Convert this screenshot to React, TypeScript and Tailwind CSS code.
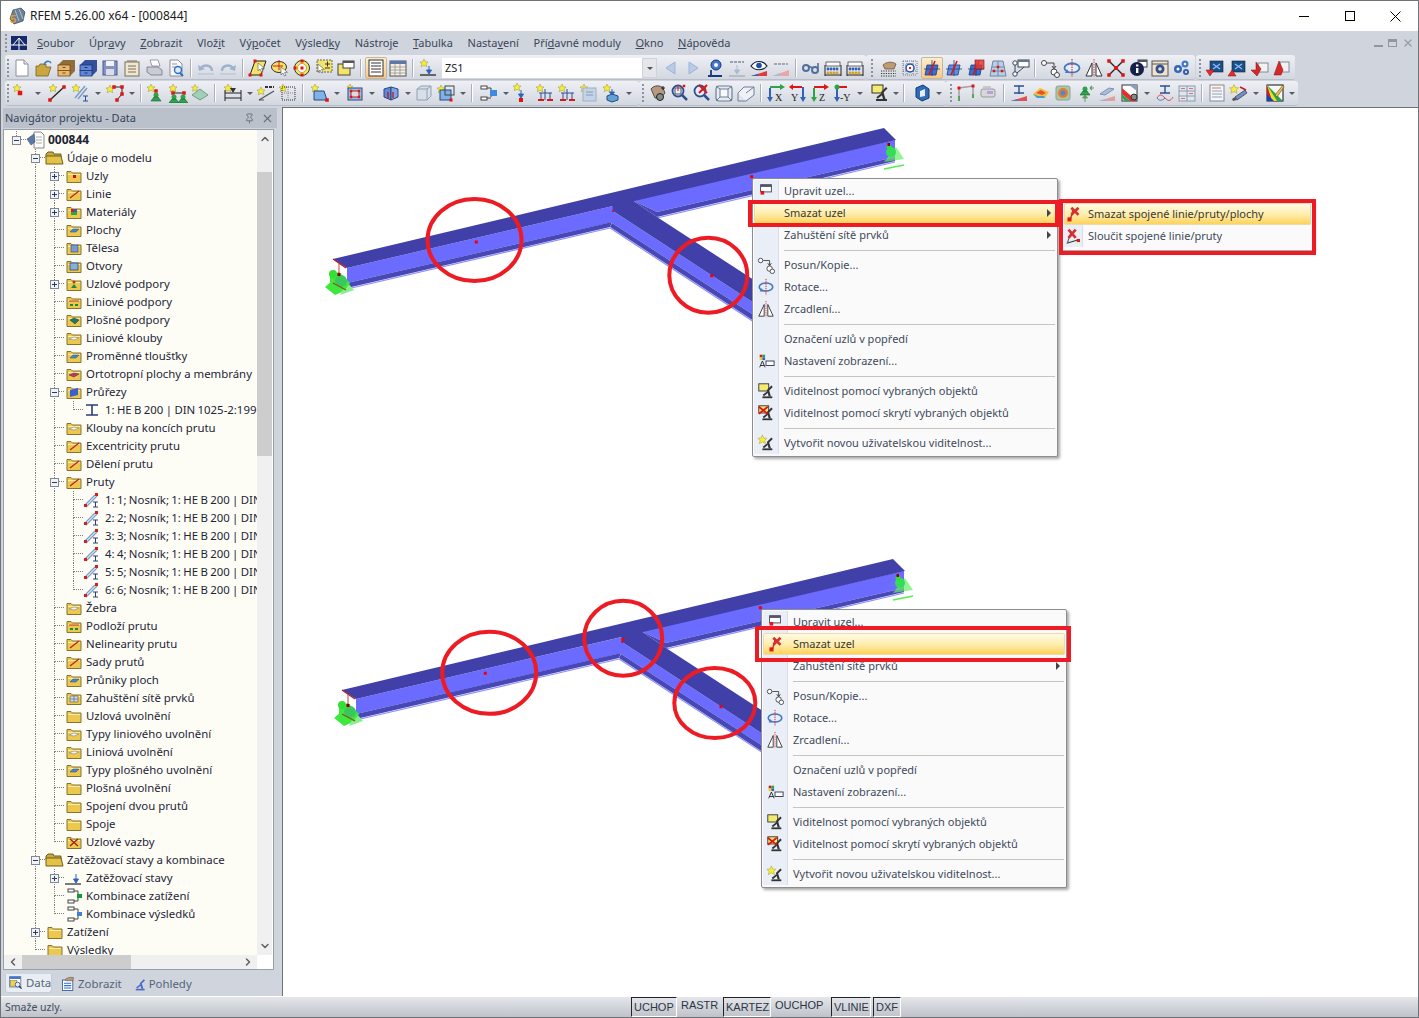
import type { ReactNode } from "react";
import { ChevronDown, ChevronLeft, ChevronRight, ChevronUp, Pin, X } from "lucide-react";

// small drawing helpers for the toolbar bitmaps
const St = ({ x = 5, y = 5, r = 3.6 }: { x?: number; y?: number; r?: number }) => (
  <path
    d={`M${x} ${y - r}l${r * 0.3} ${r * 0.7} ${r * 0.7} ${r * 0.05} -${r * 0.5} ${r * 0.45} ${r * 0.2} ${r * 0.75} -${r * 0.7} -${r * 0.4} -${r * 0.7} ${r * 0.4} ${r * 0.2} -${r * 0.75} -${r * 0.5} -${r * 0.45} ${r * 0.7} -${r * 0.05}z`}
    fill="#f7ee3a"
    stroke="#9c9430"
    strokeWidth="0.5"
  />
);
const N = ({ x, y, s = 3, c = "#e01515" }: { x: number; y: number; s?: number; c?: string }) => (
  <rect x={x - s / 2} y={y - s / 2} width={s} height={s} fill={c} />
);
const Cur = ({ x = 10, y = 9 }: { x?: number; y?: number }) => (
  <path d={`M${x} ${y}v8l2-2 1.5 3 1.5-.7-1.5-3h3z`} fill="#fff" stroke="#555" strokeWidth="0.6" />
);
const Drawer = ({ a, b, c }: { a: string; b: string; c: string }) => (
  <>
    <path d="M2 7l5-5h12v11l-5 5H2z" fill={c} />
    <rect x="2" y="7" width="12" height="5.500" fill={a} stroke={b} strokeWidth="0.8" />
    <rect x="2" y="12.500" width="12" height="5.500" fill={a} stroke={b} strokeWidth="0.8" />
    <rect x="6.500" y="9" width="3" height="1" fill={b} />
    <rect x="6.500" y="14.500" width="3" height="1" fill={b} />
  </>
);
const Plane = ({ a = "#3a6fd0" }: { a?: string }) => (
  <>
    <path d="M5 7h11l-2 10H3z" fill={a} stroke="#1c3f80" strokeWidth="0.8" />
    <path d="M10 2v16M2 11h16" stroke="#1c3f80" strokeWidth="0.8" />
    <path d="M13 3L7 17" stroke="#e01515" strokeWidth="1.6" />
  </>
);
const Bars = () => (
  <>
    <rect x="3" y="4" width="14" height="4" fill="#fff" stroke="#333" strokeWidth="0.7" />
    <path d="M2 18V7M18 18V7" stroke="#222" />
    <path d="M2 17h16" stroke="#222" />
    {[5, 8, 11, 14].map((x) => (
      <g key={x}>
        <circle cx={x} cy="11" r="1.400" fill="#2a5fc0" />
        <circle cx={x} cy="15" r="1.400" fill="#d8a020" />
      </g>
    ))}
  </>
);
const Sup = ({ x = 10, y = 12 }: { x?: number; y?: number }) => (
  <>
    <circle cx={x} cy={y - 2} r="2.500" fill="#2ea44a" />
    <path d={`M${x - 5} ${y + 4}l3-4h4l3 4z`} fill="#2ea44a" stroke="#14602a" strokeWidth="0.6" />
  </>
);
const Mic = ({ c = "#333" }: { c?: string }) => (
  <>
    <path d="M6 18h11v-2H6z" fill={c} />
    <path d="M13 16l-2-7 5-5 1.500 1.500-4 4 2 6.500z" fill={c} />
    <path d="M7 15l5-4" stroke={c} strokeWidth="2" />
  </>
);
const Tile = ({ up }: { up?: boolean }) => (
  <>
    <rect x="5" y="3" width="13" height="11" fill="#1c4f88" stroke="#123" strokeWidth="0.6" />
    <path d="M8 6l7 5M15 6l-7 5" stroke="#8fc0ff" strokeWidth="1.200" />
    <path d={up ? "M1 18h8l-4-6z" : "M1 12h8l-4 6z"} fill="#e82c2c" stroke="#801010" strokeWidth="0.5" />
  </>
);
const Glass = ({ k }: { k: ReactNode }) => (
  <>
    <circle cx="8" cy="8" r="5.500" fill="#e6eefb" stroke="#2b4f92" strokeWidth="1.800" />
    <path d="M12 12l5 5" stroke="#2b4f92" strokeWidth="2.500" />
    {k}
  </>
);

const icons: Record<string, ReactNode> = {
  new: <><path d="M4 2h8l4 4v12H4z" fill="#fff" stroke="#8a8f98" /><path d="M12 2v4h4" fill="#e8e8e8" stroke="#8a8f98" /></>,
  open: <><path d="M2 8h3l1-2h6v3h5l-3 9H2z" fill="#c9a640" stroke="#7a6320" strokeWidth="0.8" /><path d="M10 7c1-4 5-5 7-2" stroke="#3f7cc4" strokeWidth="1.600" fill="none" /></>,
  cab: <Drawer a="#edb86c" b="#6b4d22" c="#8f6d3c" />,
  cabb: <Drawer a="#5f86d8" b="#1f3570" c="#34509a" />,
  save: <><rect x="3" y="3" width="14" height="14" fill="#8492c6" stroke="#4b5a90" /><rect x="6" y="3" width="8" height="5" fill="#f2f2f7" /><rect x="6" y="11" width="8" height="6" fill="#dcdce8" /></>,
  note: <><rect x="3" y="4" width="14" height="14" fill="#f1e6cf" stroke="#77705f" /><path d="M5 3h10M6 8h8M6 11h8M6 14h8" stroke="#77705f" /></>,
  print: <><path d="M6 2h8l2 6H8z" fill="#fff" stroke="#778" strokeWidth="0.7" /><path d="M3 9h11l4 3v5H7l-4-3z" fill="#c8ccd6" stroke="#667" strokeWidth="0.7" /></>,
  prev: <><path d="M4 2h8l4 4v12H4z" fill="#f8f8f8" stroke="#8a8f98" /><path d="M6 6h5M6 9h4" stroke="#99a" /><circle cx="12" cy="12" r="3.500" fill="#dceaff" stroke="#2f6fc0" strokeWidth="1.400" /><path d="M14 15l3 3" stroke="#2f6fc0" strokeWidth="2" /></>,
  undo: <><path d="M16 13c0-6-8-7-11-3" fill="none" stroke="#9fb2cc" strokeWidth="2.400" /><path d="M2 7l1 6 6-2z" fill="#9fb2cc" /><path d="M2 16h16" stroke="#c3cddc" strokeWidth="2" /></>,
  redo: <><path d="M4 13c0-6 8-7 11-3" fill="none" stroke="#9fb2cc" strokeWidth="2.400" /><path d="M18 7l-1 6-6-2z" fill="#9fb2cc" /><path d="M2 16h16" stroke="#c3cddc" strokeWidth="2" /></>,
  para: <><path d="M7 3h11l-5 14H2z" fill="#f4e56a" stroke="#222" /><N x={7} y={3} /><N x={2} y={17} /><N x={13} y={17} /><Cur x={10} y={5} /></>,
  ell: <><ellipse cx="9" cy="9" rx="7.500" ry="5.500" fill="#f4e56a" stroke="#333" /><path d="M9 2v10M3 8h10" stroke="#e01515" /><Cur x={11} y={9} /></>,
  ring: <><circle cx="10" cy="10" r="7.500" fill="#f4e56a" stroke="#333" /><circle cx="10" cy="10" r="4.500" fill="#fff" stroke="#c8a020" /><N x={10} y={10} /><N x={10} y={3} /><N x={10} y={17} /><N x={3} y={10} /></>,
  sel: <><rect x="3" y="2" width="15" height="12" fill="#f4e56a" stroke="#666" strokeDasharray="2 1" /><path d="M11 6h5M13.500 3.500v5M11 10h5" stroke="#333" /><Cur x={4} y={6} /></>,
  win: <><rect x="2" y="6" width="12" height="11" fill="#f4e56a" stroke="#444" /><rect x="7" y="3" width="11" height="7" fill="#fff" stroke="#444" /><rect x="7" y="3" width="11" height="2" fill="#555" /></>,
  list: <><rect x="3" y="2" width="14" height="16" fill="#fff" stroke="#333" /><path d="M5 5h10M5 8h10M5 11h10M5 14h10" stroke="#333" /></>,
  table: <><rect x="2" y="3" width="16" height="15" fill="#f5f0e2" stroke="#555" /><rect x="2" y="3" width="16" height="3" fill="#5a78a8" /><path d="M2 9h16M2 12h16M2 15h16M7 6v12M12 6v12" stroke="#888" strokeWidth="0.7" /></>,
  lc: <><St x={6} y={5} r={4} /><path d="M2 17h16" stroke="#333" strokeWidth="1.400" /><path d="M11 8v6M8.500 12l2.500 4 2.500-4z" fill="#2f62b8" stroke="#2f62b8" /></>,
  back: <path d="M14 4L5 10l9 6z" fill="#b9cbe8" stroke="#9db3d8" />,
  fwd: <path d="M6 4l9 6-9 6z" fill="#b9cbe8" stroke="#9db3d8" />,
  ploc: <><circle cx="11" cy="7" r="5" fill="#4178c8" stroke="#123a80" /><circle cx="11" cy="7" r="2" fill="#fff" /><path d="M6 12v5M3 18h14" stroke="#123a80" strokeWidth="1.800" /></>,
  xxp: <><path d="M10 7v8M7.500 12l2.500 4 2.500-4z" fill="#a9bad6" stroke="#a9bad6" /><path d="M2 18h16" stroke="#a8b0bc" strokeWidth="1.400" /><path d="M3 4h14" stroke="#9aa2ae" strokeWidth="2" strokeDasharray="3 1" /></>,
  eye: <><path d="M2 8c4-6 12-6 16 0-4 5-12 5-16 0z" fill="#fff" stroke="#123" strokeWidth="1.200" /><circle cx="10" cy="7.500" r="2.800" fill="#1f4f9e" /><path d="M2 18l16-5v5z" fill="#e23a3a" /><path d="M2 18l7-2v2z" fill="#2f62b8" /></>,
  slope: <><path d="M3 6h14" stroke="#a0a7b2" strokeWidth="2" strokeDasharray="3 1" /><path d="M2 18l16-6v6z" fill="#e8a6a6" /><path d="M2 18l7-3v3z" fill="#a9bad6" /></>,
  spec: <><circle cx="5" cy="10" r="3" fill="none" stroke="#50709a" strokeWidth="2" /><circle cx="14" cy="12" r="3" fill="none" stroke="#50709a" strokeWidth="2" /><path d="M7 8l5 2M17 5v5" stroke="#50709a" strokeWidth="1.600" /></>,
  bars: <Bars />,
  hand: <><path d="M5 7c3-3 9-4 13-1l-2 5H7z" fill="#c09a70" stroke="#5c4530" strokeWidth="0.7" /><path d="M3 13h15M3 15.500h15M3 18h15" stroke="#333" strokeDasharray="1.200 1.200" /></>,
  gridg: <><path d="M3 3h14M3 7h14M3 13h14M3 17h14M3 3v14M7 3v14M13 3v14M17 3v14" stroke="#5a5a70" strokeDasharray="1 1" strokeWidth="0.8" /><circle cx="10" cy="10" r="4" fill="#fff" stroke="#2050b0" strokeWidth="1.500" /><N x={10} y={10} s={2} /></>,
  pl1: <Plane />,
  pl3: <Plane a="#5f8fe0" />,
  pl2: <><Plane /><rect x="9" y="2" width="9" height="9" fill="#e8332a" fillOpacity="0.8" stroke="#801010" strokeWidth="0.6" /></>,
  mesh: <><path d="M5 3h10l3 15H2z" fill="#b9cfe6" stroke="#6f86a8" /><path d="M10 3v15M3.500 9h13M2.800 13h14.500" stroke="#6f86a8" /><N x={10} y={9} s={2.500} /><N x={6} y={13} s={2.500} /><N x={14} y={13} s={2.500} /></>,
  nodewin: <><circle cx="5" cy="5" r="2.200" fill="#fff" stroke="#345" /><circle cx="5" cy="16" r="2.200" fill="#fff" stroke="#345" /><path d="M5 7v7M7 15l7-6" stroke="#345" /><rect x="8" y="2" width="11" height="7" fill="#fff" stroke="#345" /><rect x="8" y="2" width="11" height="2" fill="#678" /></>,
  move: <><circle cx="4" cy="5" r="2.500" fill="#fff" stroke="#444" /><circle cx="14" cy="14" r="3" fill="#fff" stroke="#444" /><circle cx="17" cy="17" r="2.500" fill="#fff" stroke="#444" /><path d="M7 5h7v5M12 8l2 3 2-3" fill="none" stroke="#444" /></>,
  rot: <><ellipse cx="10" cy="10" rx="7.500" ry="4.500" fill="#e6eefb" stroke="#4478c0" strokeWidth="1.800" /><path d="M10 1v18" stroke="#e01515" strokeDasharray="1.500 1" /><path d="M3 15l2-4 2 4z" fill="#4478c0" /></>,
  mir: <><path d="M8 5v13H2zM12 5v13h6z" fill="#fff" stroke="#333" /><path d="M10 1v18" stroke="#e01515" strokeDasharray="1.500 1" strokeWidth="0.8" /></>,
  xn: <><path d="M3 3l14 14M17 3L3 17" stroke="#222" strokeWidth="1.400" /><N x={3} y={3} s={3.500} /><N x={17} y={3} s={3.500} /><N x={3} y={17} s={3.500} /><N x={17} y={17} s={3.500} /><N x={10} y={10} s={4} /></>,
  info: <><rect x="10" y="2" width="9" height="7" fill="#fff" stroke="#345" /><rect x="10" y="2" width="9" height="2" fill="#555" /><circle cx="9" cy="11" r="7" fill="#16204a" /><rect x="8" y="10" width="2.400" height="5" fill="#fff" /><rect x="8" y="6.500" width="2.400" height="2" fill="#fff" /></>,
  gear: <><rect x="2" y="3" width="16" height="15" fill="#efe3cf" stroke="#555" /><path d="M2 6h16" stroke="#555" /><circle cx="10" cy="11" r="4.500" fill="#334f88" /><circle cx="10" cy="11" r="1.800" fill="#dde" /></>,
  gears: <><circle cx="6" cy="11" r="4" fill="#3466b8" /><circle cx="6" cy="11" r="1.500" fill="#fff" /><circle cx="13" cy="6" r="3.500" fill="#3f76c8" /><circle cx="13" cy="6" r="1.300" fill="#fff" /><circle cx="14" cy="14" r="3" fill="#2f5fa8" /><circle cx="14" cy="14" r="1" fill="#fff" /></>,
  tile1: <Tile />,
  tile2: <Tile up />,
  red1: <><rect x="9" y="5" width="10" height="9" fill="#f2f2f2" stroke="#889" /><path d="M2 12h5V4l5 7-4 7z" fill="#d62828" stroke="#801010" strokeWidth="0.5" /></>,
  red2: <><rect x="9" y="4" width="9" height="10" fill="#f2f2f2" stroke="#889" /><path d="M3 17l5-14 4 9-2 5z" fill="#d62828" stroke="#801010" strokeWidth="0.5" /></>,
  nnode: <><St x={6} y={5} r={4} /><N x={9} y={10} s={4.500} /></>,
  nline: <><St x={6} y={5} r={4} /><path d="M3 17L17 4" stroke="#222" strokeWidth="1.300" /><N x={3} y={17} s={3.500} /><N x={17} y={4} s={3.500} /></>,
  nmem: <><St x={5} y={5} r={4} /><path d="M4 15L14 3M7 16L16 5" stroke="#7e9cc8" strokeWidth="1.500" /><path d="M12 13h5M14.500 13v5M12 18h5" stroke="#2b4f92" /></>,
  npoly: <><St x={5} y={6} r={4} /><path d="M9 4h8v7l-5 6" fill="none" stroke="#222" /><N x={9} y={4} s={3.500} /><N x={17} y={4} s={3.500} /><N x={17} y={11} s={3.500} /><N x={12} y={17} s={3.500} /></>,
  nsup: <><St x={5} y={5} r={4} /><N x={10} y={8} s={3.500} /><Sup y={14} /></>,
  nlsup: <><St x={5} y={5} r={4} /><path d="M5 10h11" stroke="#222" /><N x={5} y={10} s={3.500} /><N x={16} y={10} s={3.500} /><Sup x={6} y={16} /><Sup x={15} y={16} /></>,
  nssup: <><St x={5} y={5} r={3.500} /><path d="M2 12l8-6 8 6-8 5z" fill="#9fd0b8" stroke="#7a9a88" /></>,
  ndim: <><St x={5} y={5} r={4} /><path d="M2 10h16M2 7v11M18 7v11M2 15h16" stroke="#222" /><path d="M7 5h6l-3 5z" fill="#333" /></>,
  nxx: <><St x={5} y={8} r={4} /><path d="M3 17L18 8" stroke="#555" strokeWidth="1.400" /><path d="M3 17h5" stroke="#555" /><path d="M9 4h9" stroke="#333" strokeWidth="2" strokeDasharray="3 1" /></>,
  ndot: <><St x={5} y={5} r={4} /><rect x="4" y="4" width="13" height="13" fill="none" stroke="#333" strokeDasharray="1 1" /><path d="M10 4v13M4 10h13" stroke="#888" strokeDasharray="1 1" /></>,
  nsurf: <><St x={5} y={5} r={4} /><path d="M4 8h10l3 9H4z" fill="#7fb2e8" stroke="#244a80" /><N x={17} y={17} s={3.500} /></>,
  nopen: <><St x={5} y={4} r={3} /><rect x="3" y="5" width="14" height="12" fill="#9bc0e8" stroke="#244a80" /><rect x="6" y="8" width="8" height="6" fill="#dcdcdc" stroke="#c02020" /><N x={6} y={8} s={2.500} /><N x={14} y={8} s={2.500} /><N x={6} y={14} s={2.500} /><N x={14} y={14} s={2.500} /></>,
  ncut: <><path d="M3 6l7-2v13l-7-3z" fill="#5f86d8" stroke="#244a80" /><path d="M17 6l-7-2v13l7-3z" fill="#7fa2e0" stroke="#244a80" /><path d="M7 9v6M12 9v6" stroke="#c02020" strokeWidth="1.400" /></>,
  solid: <><path d="M3 6l4-3h10v10l-4 4H3z" fill="#d8dfe8" stroke="#90a0b4" /><path d="M3 6h10v11M13 6l4-3" stroke="#90a0b4" fill="none" /></>,
  nsolid: <><St x={5} y={6} r={4} /><rect x="4" y="7" width="11" height="10" fill="#7fb2e8" stroke="#244a80" /><rect x="9" y="3" width="9" height="9" fill="none" stroke="#444" /><N x={15} y={17} s={3} /></>,
  flow: <><rect x="1" y="3" width="6" height="3" fill="#fff" stroke="#444" /><rect x="1" y="14" width="6" height="3" fill="#fff" stroke="#444" /><path d="M7 5h4v9M7 15h4" stroke="#444" fill="none" /><rect x="10" y="7" width="7" height="6" fill="#3f8ae0" /></>,
  nload: <><St x={6} y={4} r={4} /><path d="M10 7v5M7.500 11h5L10 15z" fill="#2f62b8" stroke="#2f62b8" /><N x={10} y={17} s={4} /></>,
  nframe: <><St x={5} y={5} r={4} /><path d="M4 10h13M6 10v7M15 10v7M10 6v11" stroke="#2b4f92" /><path d="M3 17h6M12 17h6" stroke="#e01515" strokeWidth="2.200" /></>,
  nfpale: <><St x={5} y={5} r={4} /><rect x="4" y="5" width="13" height="13" fill="#c3d3e8" stroke="#a0b0c4" /><path d="M7 9h7M7 12h7" stroke="#8a9ab0" /></>,
  nbox: <><St x={5} y={5} r={4} /><path d="M10 6v4M7.500 9h5L10 12z" fill="#2f62b8" stroke="#2f62b8" /><path d="M5 13l5-2 6 2v4l-6 2-5-2z" fill="#5fa2d8" stroke="#244a80" /></>,
  handg: <><path d="M3 6c3-4 9-4 12-1l2 5-4 5H7z" fill="#b59a80" stroke="#333" strokeWidth="0.8" /><circle cx="12" cy="14" r="3.500" fill="#888" stroke="#222" /><path d="M15 3v4M13 5h4" stroke="#222" /></>,
  zoomw: <Glass k={<><rect x="5" y="5" width="6" height="6" fill="none" stroke="#555" /><N x={14} y={3} s={2.500} /><path d="M8 2v6" stroke="#e01515" /></>} />,
  zoomx: <Glass k={<path d="M7 2l8 8M15 2l-8 8" stroke="#e01515" strokeWidth="2" />} />,
  cube: <><rect x="2" y="3" width="16" height="15" rx="3" fill="#e7ebf2" stroke="#6e7f96" strokeWidth="1.200" /><rect x="6" y="6" width="8" height="8" fill="#f8f8f8" stroke="#6e7f96" /><path d="M2 3l4 3M18 3l-4 3M2 18l4-4M18 18l-4-4" stroke="#6e7f96" /></>,
  cubes: <><path d="M2 10h8v8H2z" fill="#dfe4ec" stroke="#6e7f96" /><path d="M2 10l6-6h10v8l-8 6" fill="#eef1f6" stroke="#6e7f96" /><path d="M10 10l8-6" stroke="#6e7f96" /></>,
  axx: <><path d="M4 4h10" stroke="#2ea44a" strokeWidth="2" /><path d="M14 1l5 3-5 3z" fill="#2ea44a" /><path d="M4 5v9" stroke="#2f62b8" strokeWidth="2" /><path d="M1 14h6l-3 5z" fill="#2f62b8" /><text x="9" y="18" fontSize="10" fontFamily="Liberation Serif" fill="#222">X</text></>,
  axy: <><path d="M2 4h12" stroke="#e01515" strokeWidth="2" /><path d="M1 4l4-3v6z" fill="#e01515" /><path d="M15 4v10" stroke="#2f62b8" strokeWidth="2" /><path d="M12 14h6l-3 5z" fill="#2f62b8" /><text x="3" y="18" fontSize="10" fontFamily="Liberation Serif" fill="#222">Y</text></>,
  axz: <><path d="M4 4h10" stroke="#e01515" strokeWidth="2" /><path d="M14 1l5 3-5 3z" fill="#e01515" /><path d="M4 5v9" stroke="#2ea44a" strokeWidth="2" /><path d="M1 14h6l-3 5z" fill="#2ea44a" /><text x="9" y="18" fontSize="10" fontFamily="Liberation Serif" fill="#222">Z</text></>,
  axm: <><path d="M4 4h10" stroke="#e01515" strokeWidth="2" /><path d="M4 5v9" stroke="#2f62b8" strokeWidth="2" /><path d="M1 14h6l-3 5z" fill="#2f62b8" /><circle cx="4" cy="4" r="2.500" fill="#2ea44a" /><text x="7" y="18" fontSize="10" fontFamily="Liberation Serif" fill="#222">-Y</text></>,
  vis: <><rect x="2" y="2" width="11" height="8" fill="#f5ea70" stroke="#333" /><Mic /></>,
  visx: <><rect x="2" y="2" width="11" height="8" fill="#f5ea70" stroke="#333" /><Mic /><path d="M2 3l10 8M12 3L2 11" stroke="#e01515" strokeWidth="2" /></>,
  visn: <><St x={6} y={6} r={5} /><Mic /></>,
  micb: <Mic c="#4a68c8" />,
  datat: <><rect x="2" y="2" width="14" height="13" fill="#fff" stroke="#5a78a8" /><rect x="2" y="2" width="14" height="3" fill="#4a78c8" /><rect x="3" y="7" width="8" height="7" fill="#f3d050" stroke="#8a7a30" strokeWidth="0.7" /><circle cx="12" cy="12" r="3" fill="#e6eefb" stroke="#2b4f92" /><path d="M14 14l3 3" stroke="#333" strokeWidth="1.600" /></>,
  doch: <><rect x="3" y="5" width="13" height="13" fill="#fff" stroke="#2b4f92" /><path d="M5 9h9M5 12h9M5 15h9" stroke="#2b6fc8" strokeWidth="1.400" /><path d="M6 5c2-3 7-4 11-3l-1 4H8z" fill="#b59a80" stroke="#5c4530" strokeWidth="0.6" /></>,
  shape: <><path d="M4 5l7-3 6 4v9l-7 3-6-4z" fill="#2c6cb8" stroke="#16386c" /><path d="M8 8l5-2v7l-5 1z" fill="#e8edf5" /></>,
  frame: <><path d="M3 18V5l14-2v12" fill="none" stroke="#a0a0a0" strokeWidth="1.500" /><path d="M3 18v-5M17 15v-4" stroke="#5fa05f" strokeWidth="2" /><N x={3} y={5} /><N x={17} y={3} /></>,
  tag: <><rect x="2" y="6" width="14" height="8" rx="2" fill="#d8d8d8" stroke="#999" /><rect x="8" y="8" width="6" height="3" fill="#b8a0e0" /><path d="M4 4h8" stroke="#aaa" /></>,
  ires: <><path d="M5 3h10M10 3v8M5 10h10" stroke="#2b4f92" strokeWidth="1.400" /><path d="M2 18l16-5v5z" fill="#e05050" /><path d="M2 18l7-2v2z" fill="#4a78c8" /></>,
  bowl: <><path d="M2 11l7-6 9 4-4 6H6z" fill="#f2c040" /><path d="M5 10l5-3 5 3-4 2z" fill="#e85030" /><path d="M2 11l4 4h8l-1-2H7z" fill="#40a0d0" /></>,
  rcube: <><rect x="3" y="3" width="14" height="14" rx="2" fill="#a8c8a0" stroke="#90a0a0" /><circle cx="10" cy="10" r="5" fill="#e87a30" /><circle cx="10" cy="10" r="2.500" fill="#4888d8" /></>,
  reac: <><Sup y={8} /><path d="M10 13v6M7.500 15l2.500-3 2.500 3z" fill="#5fa05f" stroke="#5fa05f" /><path d="M15 5h4M15 5l2-2M15 5l2 2" stroke="#5fa05f" strokeWidth="1.200" /></>,
  sl2: <><path d="M3 11l9-6 5 1-9 6z" fill="#a8c0e0" stroke="#7a90b0" /><path d="M2 18l16-5v5z" fill="#e0a0a0" /><path d="M2 18l7-2v2z" fill="#a0b4d4" /></>,
  rain: <><rect x="2" y="2" width="15" height="16" fill="#fff" stroke="#333" /><path d="M2 5l15 13H10L2 11z" fill="#e03030" /><path d="M2 11l8 7H5l-3-3z" fill="#2ea44a" /><path d="M9 2h8v6z" fill="#88a0c0" /><circle cx="14" cy="14" r="3" fill="#888" stroke="#333" /></>,
  wave: <><path d="M5 3h10M10 3v7M5 10h10" stroke="#2b4f92" strokeWidth="1.400" /><path d="M2 15c3-5 5-3 8 0s5 4 8-1" fill="none" stroke="#e05050" /><path d="M2 15c2 3 5 3 8 0" fill="none" stroke="#3f7cc4" /></>,
  grids: <><rect x="2" y="3" width="16" height="15" fill="#dfe6ef" stroke="#8a9bb0" /><path d="M2 8h16M2 13h16M10 3v15" stroke="#8a9bb0" /><path d="M4 5.500h4M12 5.500h4M12 10.500h4M4 15.500h4" stroke="#e07070" /></>,
  rep: <><rect x="3" y="2" width="14" height="16" fill="#f6f6f6" stroke="#889" /><path d="M5 5h9" stroke="#d08050" /><path d="M5 8h10M5 11h10M5 14h10" stroke="#8aa0c0" /></>,
  paint: <><St x={5} y={6} r={4.500} /><path d="M6 14l10-7 2 3-10 7z" fill="#6f90c8" stroke="#333" strokeWidth="0.7" /><path d="M11 4l6 3" stroke="#c02020" strokeWidth="1.600" /><path d="M3 16l3-2 2 3-4 1z" fill="#555" /></>,
  rbow: <><rect x="2" y="2" width="16" height="16" fill="#f8f8f8" stroke="#111" /><path d="M2 2l16 16H2z" fill="#2ea44a" /><path d="M2 2l10 16H2z" fill="#e8e020" /><path d="M2 2l5 16H2z" fill="#e01515" /><path d="M2 11l7 7H2z" fill="#1a40c0" /><path d="M10 12l8-10 1 2-7 10z" fill="#f0c040" stroke="#543" strokeWidth="0.6" /></>,
  upr: <><rect x="4" y="3" width="12" height="8" fill="#fff" stroke="#445" /><rect x="4" y="3" width="12" height="2.500" fill="#556" /><N x={6} y={12} s={4} /></>,
  setv: <><rect x="3" y="3" width="3" height="3" fill="#e01515" /><rect x="6" y="3" width="3" height="3" fill="#2ea44a" /><rect x="3" y="6" width="3" height="3" fill="#e8d020" /><rect x="6" y="6" width="3" height="3" fill="#2f62b8" /><path d="M3 17l3-7 3 7M4 15h4" fill="none" stroke="#222" /><rect x="10" y="10" width="9" height="5" fill="#fff" stroke="#334" /></>,
  del: <><path d="M6 16L9 5" stroke="#a03030" strokeWidth="1.400" /><N x={5} y={16} s={4.500} /><path d="M7 3l8 8M15 3l-8 8" stroke="#d83030" strokeWidth="3" /></>,
  merge: <><path d="M3 18L17 14" stroke="#333" strokeWidth="1.200" /><path d="M4 17L8 5" stroke="#333" /><path d="M5 3l8 9M13 3l-8 9" stroke="#d83030" strokeWidth="3" /><N x={16} y={15} s={3.500} /></>,
};

function Ic({ n, size = 20 }: { n: string; size?: number }) {
  return (
    <svg width={size} height={size} viewBox="0 0 20 20" strokeWidth="1" className="shrink-0">
      {icons[n]}
    </svg>
  );
}

function Grip({ w }: { w: string }) {
  return (
    <div className={`${w} h-full flex flex-col items-center justify-center gap-[2px] shrink-0`}>
      {[0, 1, 2, 3, 4].map((i) => (
        <span key={i} className="w-[2px] h-[2px] bg-[#8b93a1]" />
      ))}
    </div>
  );
}

function Items({ items, active = [] }: { items: string; active?: string[] }) {
  return (
    <>
      {items.split(" ").map((it, i) => {
        if (it === "|")
          return (
            <div key={i} className="w-[8px] shrink-0 flex justify-center">
              <span className="w-px h-[18px] bg-[#a9b0bb] border-r border-white box-content" />
            </div>
          );
        if (it === "v" || it === "V")
          return (
            <div key={i} className={`${it === "v" ? "w-[11px]" : "w-[9px]"} shrink-0 flex justify-center`}>
              <span className="border-x-[3px] border-x-transparent border-t-[3px] border-t-[#555c68]" />
            </div>
          );
        if (it === "_1") return <div key={i} className="w-px shrink-0" />;
        if (it === "_2") return <div key={i} className="w-[2px] shrink-0" />;
        if (it === "_3") return <div key={i} className="w-[3px] shrink-0" />;
        if (it === "_4") return <div key={i} className="w-[4px] shrink-0" />;
        const on = active.includes(it);
        return (
          <div
            key={i}
            className={`w-[22px] h-[22px] shrink-0 flex items-center justify-center rounded-[2px] ${
              on ? "bg-linear-to-b from-[#fdeecf] to-[#fbc77f] border border-[#c2b89f]" : ""
            }`}
          >
            <Ic n={it} />
          </div>
        );
      })}
    </>
  );
}

function Bar({ className, children }: { className: string; children: ReactNode }) {
  return (
    <div className={`${className} h-full flex items-center shrink-0 rounded-[3px] bg-linear-to-b from-[#eef0f5] to-[#d3d7df] border-b border-[#b8bdc7]`}>
      {children}
    </div>
  );
}

const menuNames = ["_Soubor", "Úpr_avy", "_Zobrazit", "Vlož_it", "Vý_počet", "Výsled_ky", "Nástro_je", "_Tabulka", "Nasta_vení", "Pří_davné moduly", "_Okno", "_Nápověda"];

function MenuName({ name }: { name: string }) {
  const [a, b] = name.split("_");
  return (
    <span className="whitespace-nowrap">
      {a}
      <u>{b[0]}</u>
      {b.slice(1)}
    </span>
  );
}

type Row = { l: number; t: string; i: string; e?: "+" | "-"; bold?: boolean };

const member = (k: number) => `${k}: ${k}; Nosník; 1: HE B 200 | DIN 1025-2:1995`;

const rows: Row[] = [
  { l: 0, t: "000844", i: "model", e: "-", bold: true },
  { l: 1, t: "Údaje o modelu", i: "open", e: "-" },
  { l: 2, t: "Uzly", i: "dot", e: "+" },
  { l: 2, t: "Linie", i: "line", e: "+" },
  { l: 2, t: "Materiály", i: "mat", e: "+" },
  { l: 2, t: "Plochy", i: "plane" },
  { l: 2, t: "Tělesa", i: "solid" },
  { l: 2, t: "Otvory", i: "hole" },
  { l: 2, t: "Uzlové podpory", i: "sup", e: "+" },
  { l: 2, t: "Liniové podpory", i: "lsup" },
  { l: 2, t: "Plošné podpory", i: "ssup" },
  { l: 2, t: "Liniové klouby", i: "hinge" },
  { l: 2, t: "Proměnné tloušťky", i: "plane" },
  { l: 2, t: "Ortotropní plochy a membrány", i: "ortho" },
  { l: 2, t: "Průřezy", i: "sect", e: "-" },
  { l: 3, t: "1: HE B 200 | DIN 1025-2:1995", i: "ibeam" },
  { l: 2, t: "Klouby na koncích prutu", i: "hinge" },
  { l: 2, t: "Excentricity prutu", i: "line" },
  { l: 2, t: "Dělení prutu", i: "line" },
  { l: 2, t: "Pruty", i: "line", e: "-" },
  ...[1, 2, 3, 4, 5, 6].map((k) => ({ l: 3, t: member(k), i: "member" })),
  { l: 2, t: "Žebra", i: "hinge" },
  { l: 2, t: "Podloží prutu", i: "lsup" },
  { l: 2, t: "Nelinearity prutu", i: "line" },
  { l: 2, t: "Sady prutů", i: "line" },
  { l: 2, t: "Průniky ploch", i: "plane" },
  { l: 2, t: "Zahuštění sítě prvků", i: "mesh" },
  { l: 2, t: "Uzlová uvolnění", i: "empty" },
  { l: 2, t: "Typy liniového uvolnění", i: "hinge" },
  { l: 2, t: "Liniová uvolnění", i: "hinge" },
  { l: 2, t: "Typy plošného uvolnění", i: "plane" },
  { l: 2, t: "Plošná uvolnění", i: "empty" },
  { l: 2, t: "Spojení dvou prutů", i: "empty" },
  { l: 2, t: "Spoje", i: "empty" },
  { l: 2, t: "Uzlové vazby", i: "cross" },
  { l: 1, t: "Zatěžovací stavy a kombinace", i: "open", e: "-" },
  { l: 2, t: "Zatěžovací stavy", i: "case", e: "+" },
  { l: 2, t: "Kombinace zatížení", i: "cgreen" },
  { l: 2, t: "Kombinace výsledků", i: "cblue" },
  { l: 1, t: "Zatížení", i: "empty", e: "+" },
  { l: 1, t: "Výsledky", i: "empty" },
];

const inner: Record<string, ReactNode> = {
  dot: <rect x="8" y="8" width="3" height="3" fill="#d01010" />,
  line: <path d="M5 13l9-7" stroke="#c02020" strokeWidth="1.300" />,
  mat: <><rect x="6" y="6" width="3" height="3" fill="#d02020" /><rect x="9" y="6" width="3" height="3" fill="#2f62b8" /><rect x="6" y="9" width="6" height="3" fill="#2ea44a" /></>,
  plane: <path d="M5 11l3-3h6l-3 3z" fill="#4a86c8" stroke="#2a4a80" strokeWidth="0.5" />,
  solid: <rect x="6" y="6" width="7" height="7" fill="#7a9ad0" stroke="#2a4a80" strokeWidth="0.6" />,
  hole: <rect x="5" y="6" width="8" height="7" fill="#8ab0d8" stroke="#2a4a80" strokeWidth="0.8" />,
  sup: <><circle cx="9" cy="7" r="1.500" fill="#c03020" /><path d="M6 13l3-4 3 4z" fill="#1f8a3a" /></>,
  lsup: <><path d="M4 8h10" stroke="#c03020" /><path d="M5 12h3M10 12h3" stroke="#1f8a3a" strokeWidth="2" /></>,
  ssup: <path d="M5 9l4-2 5 2-4 4z" fill="#1f7a5a" stroke="#114" strokeWidth="0.4" />,
  hinge: <path d="M4 10l5-2 5 1-5 2z" fill="#f4f4f4" stroke="#777" strokeWidth="0.5" />,
  ortho: <path d="M4 10l5-2 5 1-5 3z" fill="#d03060" stroke="#335" strokeWidth="0.5" />,
  sect: <path d="M5 7l8-2v7l-8 2z" fill="#3a60d0" />,
  mesh: <path d="M5 7h8v6H5zM9 7v6M5 10h8" fill="#c8d8ea" stroke="#444" strokeWidth="0.5" />,
  cross: <path d="M5 6l8 7M13 6l-8 7" stroke="#a02020" strokeWidth="1.400" />,
  empty: null,
};

function Folder({ k }: { k: string }) {
  return (
    <svg width="18" height="18" viewBox="0 0 18 18" className="shrink-0">
      <path d="M2 4.500h4l1.500 1.500H16v9.500H2z" fill="#ecc94e" stroke="#85732f" strokeWidth="1" />
      <path d="M3 7.500h12" stroke="#fbeea8" strokeWidth="1" />
      {inner[k]}
    </svg>
  );
}

function TreeIcon({ k }: { k: string }) {
  if (k === "model")
    return (
      <svg width="19" height="18" viewBox="0 0 19 18" className="shrink-0">
        <path d="M8 1h7l3 3v13H8z" fill="#fff" stroke="#888" />
        <path d="M10 6h6M10 9h6M10 12h6" stroke="#aaa" />
        <path d="M1 8l7-5 1 8-4 3z" fill="#5a78a8" stroke="#345" strokeWidth="0.5" />
      </svg>
    );
  if (k === "open")
    return (
      <svg width="19" height="18" viewBox="0 0 19 18" className="shrink-0">
        <path d="M1 5l2-2h5l1 2h7v3H1z" fill="#c9a93a" stroke="#6d5c20" />
        <path d="M1 15V7h15l2 8z" fill="#e3c245" stroke="#6d5c20" />
      </svg>
    );
  if (k === "ibeam")
    return (
      <svg width="19" height="18" viewBox="0 0 19 18" className="shrink-0">
        <path d="M3 4h12M9 4v10M3 14h12" stroke="#2b3f7a" strokeWidth="1.600" fill="none" />
      </svg>
    );
  if (k === "member")
    return (
      <svg width="19" height="18" viewBox="0 0 19 18" className="shrink-0">
        <path d="M1 15L12 4M3 16L14 5" stroke="#7e9cc8" strokeWidth="1.300" />
        <rect x="1" y="13" width="3" height="3" fill="#d02020" />
        <rect x="12" y="2" width="3" height="3" fill="#d02020" />
        <path d="M10 11h5M12.500 11v5M10 16h5" stroke="#2b3f7a" />
      </svg>
    );
  if (k === "case")
    return (
      <svg width="19" height="18" viewBox="0 0 19 18" className="shrink-0">
        <path d="M1 15h16" stroke="#333" strokeWidth="1.300" />
        <path d="M12 5v6M9.500 10h5L12 14z" fill="#2f62b8" stroke="#2f62b8" />
      </svg>
    );
  if (k === "cgreen" || k === "cblue")
    return (
      <svg width="19" height="18" viewBox="0 0 19 18" className="shrink-0">
        <rect x="4" y="2" width="6" height="3" fill="#fff" stroke="#444" />
        <rect x="4" y="13" width="6" height="3" fill="#fff" stroke="#444" />
        <path d="M10 4h4v3M10 14h4v-4" stroke="#444" fill="none" />
        <rect x="13" y="7" width="5" height="4" fill={k === "cgreen" ? "#129a3a" : "#3f7fd8"} />
      </svg>
    );
  return <Folder k={k} />;
}

function TreeRow({ r, idx }: { r: Row; idx: number }) {
  const hasNext = (c: number) => {
    for (let j = idx + 1; j < rows.length; j++) {
      if (rows[j].l < c) return false;
      if (rows[j].l === c) return true;
    }
    return false;
  };
  const cols = [];
  for (let c = 0; c <= r.l; c++) {
    const own = c === r.l;
    cols.push(
      <div key={c} className="relative w-[19px] h-full grid grid-cols-2 grid-rows-2 shrink-0">
        <div className={own || hasNext(c) ? "border-r border-dotted border-[#7d7d7d]" : ""} />
        <div className={own ? "border-b border-dotted border-[#7d7d7d]" : ""} />
        <div className={hasNext(c) ? "border-r border-dotted border-[#7d7d7d]" : ""} />
        <div />
        {own && r.e && (
          <span className="absolute left-[5px] top-[5px] w-[9px] h-[9px] bg-[#f2f3f7] border border-[#7d8899] flex items-center justify-center">
            <span className="absolute w-[5px] h-px bg-[#2c3a60]" />
            {r.e === "+" && <span className="absolute w-px h-[5px] bg-[#2c3a60]" />}
          </span>
        )}
      </div>
    );
  }
  return (
    <div className="flex h-[18px] items-center shrink-0">
      {cols}
      <div className="w-[19px] flex justify-center shrink-0">
        <TreeIcon k={r.i} />
      </div>
      <span
        className={`ml-[3px] whitespace-nowrap text-[#1d2536] ${r.bold ? "font-bold text-[12px]" : "text-[11.4px]"} ${
          r.l === 3 ? "[word-spacing:-0.6px]" : ""
        }`}
      >
        {r.t}
      </span>
    </div>
  );
}

function Scene({ offset }: { offset: boolean }) {
  return (
    <g transform={offset ? "translate(9 431)" : undefined}>
      <path d="M347 289L610 228M657 218L895 162" stroke="#8d8dff" strokeWidth="1.200" fill="none" />
      <path d="M610 228L800 352" stroke="#8d8dff" strokeWidth="1.200" fill="none" />
      {/* main beam, left part */}
      <polygon points="347,268 613,206 613,222 347,283" fill="#6b6bff" />
      <polygon points="347,283 612,222 610,227 347,288" fill="#4848b4" />
      {/* main beam, right part */}
      <polygon points="632,200 895,140 895,157 657,212" fill="#6b6bff" />
      <polygon points="632,200 657,212 895,157 895,161 657,217" fill="#4848b4" />
      {/* stem */}
      <polygon points="613,211 800,333 800,345 612,223" fill="#6b6bff" />
      <polygon points="612,223 800,345 800,351 610,227" fill="#4848b4" />
      <polygon points="632,200 657,217 800,310 800,333 613,211 612,202" fill="#4040a8" />
      {/* top flange */}
      <polygon points="333,259 884,128 896,140 347,268" fill="#4040a8" />
      <rect x="612" y="210" width="2" height="2" fill="#d01050" />
      {/* left support */}
      <polygon points="325,287 339,275 351,288 335,295" fill="#3fe83f" />
      <polygon points="340,295 354,290 347,282" fill="#88f088" />
      <polygon points="330,275 339,272 350,283 345,290 330,285" fill="#3fe83f" />
      <circle cx="333" cy="274" r="4" fill="#33e033" />
      <circle cx="341" cy="281" r="6" fill="#3ac85a" />
      <path d="M333 259l13 9" stroke="#b02020" strokeWidth="1.300" />
      <path d="M339 263v12" stroke="#c84040" />
      <path d="M333 283l13 7" stroke="#885522" strokeWidth="1.300" />
      <rect x="337.500" y="273" width="3" height="3" fill="#880000" />
      {/* right support */}
      <polygon points="884,162 904,159 896,147" fill="#66ee66" fillOpacity="0.7" />
      <circle cx="891" cy="152" r="5" fill="#33dd55" />
      <circle cx="889" cy="147" r="2.500" fill="#33dd33" />
      <path d="M884 169l20-4" stroke="#55ee55" strokeWidth="1.500" />
      <rect x="887.500" y="143" width="2.500" height="3" fill="#880000" />
    </g>
  );
}

function Ring({ cx, cy, rx, ry }: { cx: number; cy: number; rx: number; ry: number }) {
  return <ellipse cx={cx} cy={cy} rx={rx} ry={ry} fill="none" stroke="#ed1c24" strokeWidth="4" />;
}

const Dot = ({ x, y }: { x: number; y: number }) => <rect x={x - 1.500} y={y - 1.500} width="3" height="3" fill="#f00000" />;

function MenuRow({ icon, text, arrow, hot, narrow }: { icon?: string; text: string; arrow?: boolean; hot?: boolean; narrow?: boolean }) {
  return (
    <div
      className={`flex h-[22px] items-center mx-[1px] shrink-0 ${
        hot ? "bg-linear-to-b from-[#fffbe8] via-[#ffeeb0] via-50% to-[#fdd04a] outline outline-[#e8dcae] -outline-offset-1 rounded-[2px]" : ""
      }`}
    >
      <div className={`${narrow ? "w-[19px]" : "w-[25px]"} h-full flex items-center justify-center shrink-0 ${hot ? "" : "bg-[#e9eef7] border-r border-[#d8dde8]"}`}>
        {icon && <Ic n={icon} size={18} />}
      </div>
      <span className={`ml-[5px] flex-1 text-[11px] whitespace-nowrap ${hot ? "text-[#3a3a30]" : "text-[#414a5c]"}`}>{text}</span>
      {arrow && <span className="mr-[5px] border-y-[4px] border-y-transparent border-l-[4px] border-l-[#444]" />}
    </div>
  );
}

function MenuSep() {
  return (
    <div className="flex h-[8px] mx-[1px] shrink-0">
      <div className="w-[25px] bg-[#e9eef7] border-r border-[#d8dde8]" />
      <div className="flex-1 ml-[5px] mr-[1px] flex items-center">
        <span className="w-full h-px bg-[#c4c4c4]" />
      </div>
    </div>
  );
}

function NodeMenu({ className, withSub }: { className: string; withSub: boolean }) {
  return (
    <div className={`absolute ${className} w-[306px] h-[279px] bg-[#fafafa] border border-[#8d8d8d] rounded-[2px] py-[1px] flex flex-col shadow-[2px_2px_3px_rgba(0,0,0,0.35)]`}>
      <MenuRow icon="upr" text="Upravit uzel..." />
      <MenuRow hot arrow={withSub} icon={withSub ? undefined : "del"} text="Smazat uzel" />
      <MenuRow arrow text="Zahuštění sítě prvků" />
      <MenuSep />
      <MenuRow icon="move" text="Posun/Kopie..." />
      <MenuRow icon="rot" text="Rotace..." />
      <MenuRow icon="mir" text="Zrcadlení..." />
      <MenuSep />
      <MenuRow text="Označení uzlů v popředí" />
      <MenuRow icon="setv" text="Nastavení zobrazení..." />
      <MenuSep />
      <MenuRow icon="vis" text="Viditelnost pomocí vybraných objektů" />
      <MenuRow icon="visx" text="Viditelnost pomocí skrytí vybraných objektů" />
      <MenuSep />
      <MenuRow icon="visn" text="Vytvořit novou uživatelskou viditelnost..." />
    </div>
  );
}

const statusCells = [
  { t: "UCHOP", on: true, w: "w-[46px]" },
  { t: "RASTR", on: false, w: "w-[42px]" },
  { t: "KARTEZ", on: true, w: "w-[48px]" },
  { t: "OUCHOP", on: false, w: "w-[56px]" },
  { t: "VLINIE", on: true, w: "w-[40px]" },
  { t: "DXF", on: true, w: "w-[28px]" },
];

export default function App() {
  return (
    <div className="w-[1419px] h-[1018px] flex flex-col overflow-hidden bg-[#cfd4dd] border border-[#6f7276] font-['Noto_Sans','Liberation_Sans',sans-serif]">
      {/* title bar */}
      <div className="h-[30px] bg-white flex items-center shrink-0">
        <svg width="18" height="18" viewBox="0 0 18 18" className="ml-[7px] shrink-0">
          <path d="M5 3l8-2 4 4-2 9-9 3-4-5z" fill="#6b8096" stroke="#34465a" strokeWidth="0.7" />
          <path d="M7 3l4 11M11 2l4 10" stroke="#c3d0dc" strokeWidth="0.8" />
          <text x="2" y="16" fontSize="11" fontWeight="700" fontFamily="Liberation Sans" fill="#e09a20">5</text>
        </svg>
        <span className="ml-[4px] text-[12px] text-[#1a1a1a] whitespace-nowrap">RFEM 5.26.00 x64 - [000844]</span>
        <div className="ml-auto flex h-full">
          <div className="w-[46px] flex items-center justify-center"><span className="w-[10px] h-px bg-black" /></div>
          <div className="w-[45px] flex items-center justify-center"><span className="w-[10px] h-[10px] border border-black" /></div>
          <div className="w-[46px] flex items-center justify-center">
            <svg width="11" height="11" viewBox="0 0 11 11"><path d="M.5.500l10 10M10.500.500l-10 10" stroke="#000" /></svg>
          </div>
        </div>
      </div>

      {/* menu bar */}
      <div className="h-[24px] flex items-center shrink-0 text-[11px] text-[#3a4659]">
        <Grip w="w-[10px]" />
        <svg width="16" height="14" viewBox="0 0 16 14" className="shrink-0">
          <rect width="16" height="14" fill="#16296a" />
          <path d="M0 9h16M8 2L2 9M8 2l6 7M8 2v12" stroke="#fff" strokeWidth="1" fill="none" />
        </svg>
        <div className="ml-[10px] flex gap-[14.600px]">
          {menuNames.map((m) => (
            <MenuName key={m} name={m} />
          ))}
        </div>
        <div className="ml-auto mr-[4px] flex items-center gap-[5px] text-[#9aa2ae]">
          <span className="w-[9px] h-[2px] bg-[#8f97a3] mt-[6px]" />
          <span className="w-[9px] h-[8px] border border-[#8f97a3] border-t-[3px]" />
          <X size={12} strokeWidth={3} />
        </div>
      </div>

      {/* toolbars */}
      <div className="h-[25px] flex pl-[4px] shrink-0">
        <Bar className="w-[861px] pt-[2px]">
          <Grip w="w-[6px]" />
          <Items items="new open cab cabb save note print prev | undo redo | para ell ring sel win | list table | lc" active={["list"]} />
          <div className="ml-[3px] w-[215px] h-[20px] bg-white flex items-stretch shrink-0">
            <span className="flex-1 pl-[3px] text-[11px] leading-[20px] text-[#222]">ZS1</span>
            <span className="w-[15px] bg-[#e3e6eb] border border-[#d0d4da] flex items-center justify-center">
              <span className="border-x-[3px] border-x-transparent border-t-[3px] border-t-[#555]" />
            </span>
          </div>
          <div className="w-[3px] shrink-0" />
          <Items items="back fwd ploc xxp eye slope | spec bars bars" />
        </Bar>
        <Bar className="w-[329px] pt-[2px]">
          <Grip w="w-[11px]" />
          <Items items="hand gridg pl1 pl3 pl2 mesh nodewin | move rot mir xn info gear gears" active={["pl1"]} />
        </Bar>
        <Bar className="w-[99px] ml-px pt-[2px]">
          <Grip w="w-[8px]" />
          <Items items="tile1 tile2 red1 red2" />
        </Bar>
      </div>
      <div className="h-[25px] mt-px flex pl-[4px] shrink-0">
        <Bar className="w-[634px]">
          <Grip w="w-[5px]" />
          <Items items="nnode v _3 nline _2 nmem v _1 npoly v | nsup nlsup nssup | _3 ndim v nxx ndot | _2 nsurf v _2 nopen v _3 ncut v solid nsolid v | _3 flow V nload _2 nframe nframe nfpale _1 nbox v" />
        </Bar>
        <Bar className="w-[307px]">
          <Grip w="w-[8px]" />
          <Items items="handg zoomw zoomx cube cubes | axx axy axz _1 axm v _4 vis V | _3 shape v" />
        </Bar>
        <Bar className="w-[352px]">
          <Grip w="w-[9px]" />
          <Items items="frame _1 tag | ires bowl rcube reac sl2 _1 rain v _2 wave grids | rep paint v _3 rbow v" />
        </Bar>
      </div>

      {/* main area */}
      <div className="flex-1 mt-px flex min-h-0">
        <div className="w-[281px] shrink-0 pt-px pl-[2px] flex flex-col">
          <div className="w-[274px] h-[20px] flex items-center pl-[2px] pr-[3px] bg-[#bac1cb] text-[11px] text-[#36445a] shrink-0">
            <span>Navigátor projektu - Data</span>
            <Pin size={11} className="ml-auto text-[#66707e]" />
            <X size={13} className="ml-[6px] text-[#66707e]" />
          </div>
          <div className="w-[271px] h-[841px] mt-px border border-[#98a0ab] bg-white flex flex-col shrink-0">
            <div className="h-[825px] flex shrink-0">
              <div className="w-[253px] h-full overflow-hidden bg-[#fdfdf6] pt-px flex flex-col shrink-0">
                <div className="pl-[3px]">
                  {rows.map((r, i) => (
                    <TreeRow key={i} r={r} idx={i} />
                  ))}
                </div>
              </div>
              <div className="w-[15px] h-full bg-[#f0f0f0] flex flex-col shrink-0">
                <div className="h-[18px] flex items-center justify-center"><ChevronUp size={12} strokeWidth={3} className="text-[#606060]" /></div>
                <div className="h-[24px]" />
                <div className="h-[284px] bg-[#cdcdcd]" />
                <div className="flex-1" />
                <div className="h-[18px] flex items-center justify-center"><ChevronDown size={12} strokeWidth={3} className="text-[#606060]" /></div>
              </div>
            </div>
            <div className="h-[14px] w-[253px] bg-[#f0f0f0] flex items-center shrink-0">
              <div className="w-[18px] flex justify-center"><ChevronLeft size={12} strokeWidth={3} className="text-[#606060]" /></div>
              <div className="w-[109px] h-full bg-[#cdcdcd]" />
              <div className="ml-auto w-[18px] flex justify-center"><ChevronRight size={12} strokeWidth={3} className="text-[#606060]" /></div>
            </div>
          </div>
          <div className="flex-1 flex items-start pt-[4px] pl-[2px] text-[11.4px] text-[#56647a]">
            <div className="h-[19px] w-[47px] flex items-center gap-[2px] bg-[#e9eef4] border border-t-0 border-[#c5ccd6] rounded-b-[3px] pl-[2px] shrink-0">
              <Ic n="datat" size={16} />
              <span>Data</span>
            </div>
            <div className="h-[19px] ml-[8px] flex items-center gap-[2px] shrink-0">
              <Ic n="doch" size={16} />
              <span>Zobrazit</span>
            </div>
            <div className="h-[19px] ml-[9px] flex items-center gap-[2px] shrink-0">
              <Ic n="micb" size={16} />
              <span>Pohledy</span>
            </div>
          </div>
        </div>

        <div className="relative flex-1 bg-white overflow-hidden border-l border-t border-[#6d7178]">
          <svg viewBox="283 108 1135 888" className="absolute left-0 top-0 w-[1135px] h-[888px]">
            <Scene offset={false} />
            <Scene offset />
            <Ring cx={474.5} cy={240} rx={47} ry={41} />
            <Ring cx={708.3} cy={275.3} rx={39} ry={37.5} />
            <Ring cx={489.2} cy={672.8} rx={47} ry={41} />
            <Ring cx={623.2} cy={638.3} rx={39} ry={37.5} />
            <Ring cx={714.8} cy={703} rx={40.5} ry={35} />
            <Dot x={476.3} y={242} />
            <Dot x={711.7} y={275.7} />
            <Dot x={751.7} y={176.7} />
            <Dot x={485.3} y={673.3} />
            <Dot x={623} y={639.3} />
            <Dot x={721} y={706.7} />
            <Dot x={760.3} y={607.7} />
          </svg>

          <NodeMenu className="left-[469px] top-[70px]" withSub />
          <NodeMenu className="left-[478px] top-[501px]" withSub={false} />

          <div className="absolute left-[779px] top-[93px] w-[251px] h-[50px] bg-[#fafafa] border border-[#a8a8a8] py-[1px] flex flex-col shadow-[2px_2px_3px_rgba(0,0,0,0.3)]">
            <MenuRow hot narrow icon="del" text="Smazat spojené linie/pruty/plochy" />
            <MenuRow narrow icon="merge" text="Sloučit spojené linie/pruty" />
          </div>

          <div className="absolute left-[465px] top-[92px] w-[311px] h-[27px] border-[4px] border-[#ed1c24]" />
          <div className="absolute left-[776px] top-[91px] w-[257px] h-[56px] border-[4px] border-[#ed1c24]" />
          <div className="absolute left-[472px] top-[518px] w-[316px] h-[36px] border-[4px] border-[#ed1c24]" />
        </div>
      </div>

      {/* status bar */}
      <div className="h-[21px] flex items-center shrink-0 bg-linear-to-b from-[#e4e6ea] to-[#bfc3ca] border-t border-white">
        <span className="w-[630px] pl-[4px] pt-px text-[10.500px] text-[#414c5c] shrink-0">Smaže uzly.</span>
        <div className="flex h-full gap-[2px]">
          {statusCells.map((c) => (
            <div
              key={c.t}
              className={`${c.w} h-full flex justify-start pl-[2px] text-[11px] font-['Liberation_Sans',sans-serif] text-[#2c3646] ${
                c.on ? "items-center border-l border-t border-[#20242a] border-r-white border-b-white border-r border-b" : "items-start"
              }`}
            >
              {c.t}
            </div>
          ))}
        </div>
      </div>
    </div>
  );
}
